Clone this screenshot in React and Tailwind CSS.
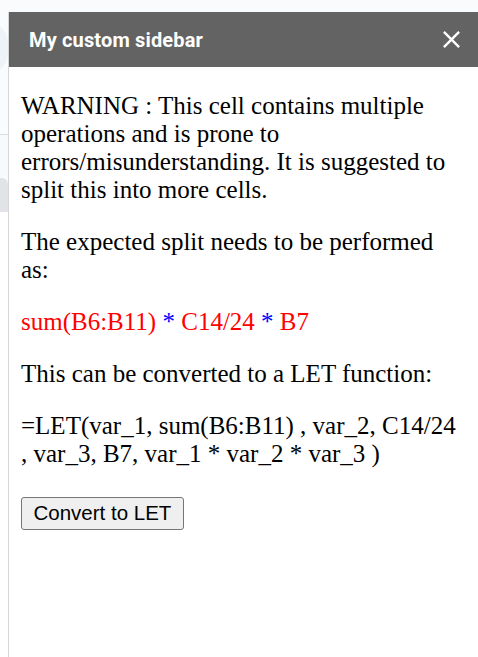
import React from "react";

export default function App() {
  return (
    <div className="flex w-[478px] h-[657px] overflow-hidden bg-[#f9fbfd]">
      {/* left strip from underlying page */}
      <div className="w-[8px] flex flex-col shrink-0">
        <div className="h-[134px] relative overflow-hidden bg-[#f9fbfd]">
          <div className="absolute left-[-40px] top-[20px] w-[48px] h-[56px] rounded-full bg-[#eef2f9]"></div>
        </div>
        <div className="h-[1px] bg-[#dadce0]"></div>
        <div className="h-[43px] bg-[#f8f9fa]"></div>
        <div className="h-[34px] rounded-tr-[6px] bg-[#e1e3e6]"></div>
        <div className="flex-1 bg-white"></div>
      </div>
      <div className="flex-1 flex flex-col pt-[12px]">
        <div className="flex-1 flex flex-col border-l border-[#d6d6d6] bg-white">
          <div className="h-[55px] bg-[#636363] flex items-center justify-between pl-[20px] pr-[12px] shrink-0">
            <span className="text-white font-bold text-[20px] tracking-[0.15px] font-['Roboto',sans-serif]">My custom sidebar</span>
            <svg width="29" height="29" viewBox="0 0 24 24" fill="#ffffff">
              <path d="M19 6.41L17.59 5 12 10.59 6.41 5 5 6.41 10.59 12 5 17.59 6.41 19 12 13.41 17.59 19 19 17.59 13.41 12z" />
            </svg>
          </div>
          <div className="px-[12px] pt-[25px] font-['Liberation_Serif',serif] text-[25px] text-black leading-[28px]">
            <p className="mb-[24px]">
              WARNING : This cell contains multiple operations and is prone to errors/misunderstanding. It is suggested to split this into more cells.
            </p>
            <p className="mb-[24px]">The expected split needs to be performed as:</p>
            <p className="mb-[24px]">
              <span className="text-[#ff0000]">sum(B6:B11)</span>
              <span className="text-[#0000ff]"> * </span>
              <span className="text-[#ff0000]">C14/24</span>
              <span className="text-[#0000ff]"> * </span>
              <span className="text-[#ff0000]">B7</span>
            </p>
            <p className="mb-[24px]">This can be converted to a LET function:</p>
            <p className="mb-[29px]">
              =LET(var_1, sum(B6:B11) , var_2, C14/24 , var_3, B7, var_1 * var_2 * var_3 )
            </p>
            <button className="block h-[33px] px-[11.5px] border-[1.5px] border-[#767676] bg-[#efefef] rounded-[3px] font-['Liberation_Sans',Arial,sans-serif] text-[20.5px] text-black leading-none">
              Convert to LET
            </button>
          </div>
        </div>
      </div>
    </div>
  );
}
